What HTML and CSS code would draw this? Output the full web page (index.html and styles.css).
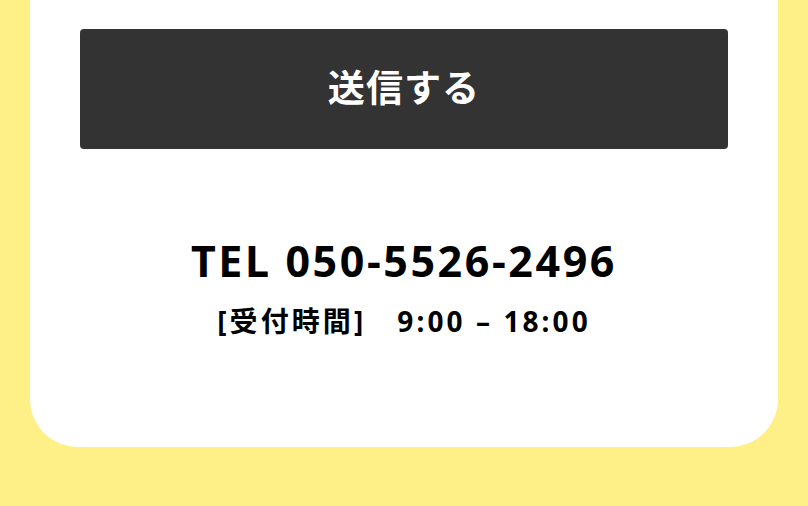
FILE: index.html
```html
<!DOCTYPE html>
<html lang="ja">
<head>
<meta charset="utf-8">
<link rel="stylesheet" href="styles.css">
</head>
<body>
<div class="page">
  <div class="card">
    <button class="submit">送信する</button>
    <div class="contact">
      <p class="tel">TEL 050-5526-2496</p>
      <p class="hours">[受付時間]　9:00 – 18:00</p>
    </div>
  </div>
</div>
</body>
</html>
```
FILE: styles.css
```css
html, body {
  margin: 0;
  padding: 0;
  background: #fef086;
}
.page {
  width: 808px;
  height: 506px;
  padding: 0 30px;
  box-sizing: border-box;
  font-family: "Noto Sans", "Noto Sans CJK JP", sans-serif;
}
.card {
  background: #fff;
  height: 447px;
  border-radius: 0 0 48px 48px;
  padding: 29px 50px 0;
  box-sizing: border-box;
}
.submit {
  display: flex;
  align-items: center;
  justify-content: center;
  width: 100%;
  height: 120px;
  border: none;
  border-radius: 4px;
  background: #333;
  color: #fff;
  font-family: "Noto Sans CJK JP", sans-serif;
  font-weight: 700;
  font-size: 37px;
  line-height: 40px;
  letter-spacing: 0.03em;
  padding: 0 0 6px;
}
.contact {
  text-align: center;
  margin-top: 87px;
  color: #000;
}
.tel {
  margin: 0;
  font-weight: 700;
  font-size: 43px;
  line-height: 50px;
  letter-spacing: 0.06em;
}
.hours {
  margin: 15px 0 0;
  font-weight: 700;
  font-size: 28px;
  line-height: 40px;
  letter-spacing: 0.11em;
}
```
